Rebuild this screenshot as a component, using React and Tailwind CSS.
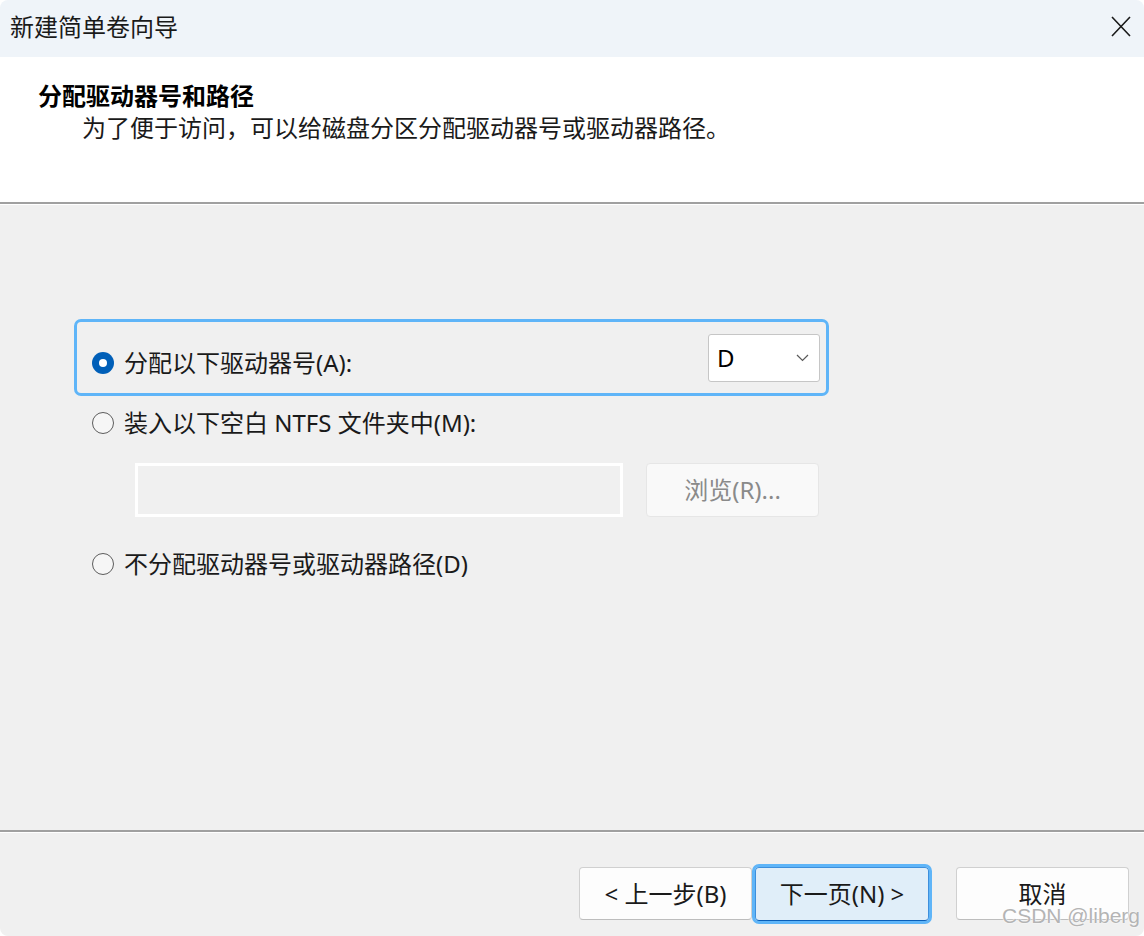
import React from 'react';

const font = { fontFamily: '"Noto Sans", "Noto Sans CJK SC", sans-serif' };

function Radio({ checked }) {
    if (checked) {
        return (
            <div className="w-[22px] h-[22px] rounded-full bg-[#005fb8] flex items-center justify-center shrink-0">
                <div className="w-[8px] h-[8px] rounded-full bg-white" />
            </div>
        );
    }
    return <div className="w-[22px] h-[22px] rounded-full border-[1.5px] border-[#5c5c5c] bg-[#f6f6f6] shrink-0" />;
}

function Option({ checked, children }) {
    return (
        <div className="flex items-center gap-[10px] h-[32px]">
            <Radio checked={checked} />
            <span className="text-[24px] leading-[32px] text-[#1a1a1a]">{children}</span>
        </div>
    );
}

export default function App() {
    return (
        <div className="w-[1144px] h-[936px] bg-white" style={font}>
            <div className="relative w-full h-full rounded-[8px] overflow-hidden flex flex-col">
                {/* Title bar */}
                <div className="h-[57px] bg-[#eff4f9] flex items-center justify-between pl-[10px] pr-[13px] pb-[4px]">
                    <span className="text-[24px] leading-[32px] text-[#1a1a1a]">新建简单卷向导</span>
                    <svg width="20" height="21" viewBox="0 0 20 21" fill="none" stroke="#1a1a1a" strokeWidth="1.6">
                        <path d="M1 1 L19 20 M19 1 L1 20" />
                    </svg>
                </div>

                {/* Header */}
                <div className="h-[145px] bg-white pt-[23px]">
                    <div className="pl-[38px] text-[24px] leading-[32px] font-bold text-black">分配驱动器号和路径</div>
                    <div className="pl-[82px] text-[24px] leading-[32px] text-[#1a1a1a]">为了便于访问，可以给磁盘分区分配驱动器号或驱动器路径。</div>
                </div>
                <div className="h-[2px] bg-[#a0a0a0]" />
                <div className="h-[1px] bg-white" />

                {/* Body */}
                <div className="flex-1 bg-[#f0f0f0] pt-[114px]">
                    <div className="ml-[74px] w-[755px] h-[77px] border-[3px] border-[#5fb5f8] rounded-[7px] flex items-center justify-between pl-[15px] pr-[6px]">
                        <div className="mt-[11px]">
                            <Option checked>分配以下驱动器号(A):</Option>
                        </div>
                        <div className="w-[112px] h-[48px] bg-white border border-[#c6c6c6] rounded-[3px] flex items-center justify-between pl-[8px] pr-[10px]">
                            <span className="text-[24px] leading-[32px] text-black">D</span>
                            <svg width="13" height="8" viewBox="0 0 13 8" fill="none" stroke="#5a5a5a" strokeWidth="1.2">
                                <path d="M1 1 L6.5 6.5 L12 1" />
                            </svg>
                        </div>
                    </div>

                    <div className="ml-[92px] mt-[11px]">
                        <Option>装入以下空白 NTFS 文件夹中(M):</Option>
                    </div>

                    <div className="ml-[135px] mt-[24px] flex gap-[23px]">
                        <div className="w-[488px] h-[54px] border-[3px] border-white bg-[#f0f0f0]" />
                        <div className="w-[173px] h-[54px] rounded-[4px] border border-[#e6e6e6] bg-[#f9f9f9] flex items-center justify-center">
                            <span className="text-[24px] leading-[32px] text-[#8a8a8a]">浏览(R)...</span>
                        </div>
                    </div>

                    <div className="ml-[92px] mt-[31px]">
                        <Option>不分配驱动器号或驱动器路径(D)</Option>
                    </div>
                </div>

                <div className="h-[2px] bg-[#a0a0a0]" />
                <div className="h-[1px] bg-white" />

                {/* Footer */}
                <div className="h-[103px] bg-[#f0f0f0] pt-[34px] pr-[15px] flex items-start justify-end">
                    <button className="w-[173px] h-[53px] rounded-[4px] border border-[#d0d0d0] border-b-[#bdbdbd] bg-[#fdfdfd] text-[24px] leading-[32px] text-[#1a1a1a]">
                        &lt; 上一步(B)
                    </button>
                    <button className="ml-[3px] w-[174px] h-[54px] rounded-[4px] border border-[#3d8fdc] border-b-[#0a5fb8] bg-[#e0eef9] outline-3 outline-[#5fb5f8] text-[24px] leading-[32px] text-[#1a1a1a]">
                        下一页(N) &gt;
                    </button>
                    <button className="ml-[27px] w-[173px] h-[53px] rounded-[4px] border border-[#d0d0d0] border-b-[#bdbdbd] bg-[#fdfdfd] text-[24px] leading-[32px] text-[#1a1a1a]">
                        取消
                    </button>
                </div>

                {/* Watermark */}
                <span
                    className="absolute right-[4px] bottom-[8px] text-[21px] leading-[24px] text-[#b4b4b4]"
                    style={{ fontFamily: '"Liberation Sans", sans-serif', textShadow: '0 0 2px #ffffff, 0 0 1px #ffffff' }}
                >
                    CSDN @liberg
                </span>
            </div>
        </div>
    );
}
